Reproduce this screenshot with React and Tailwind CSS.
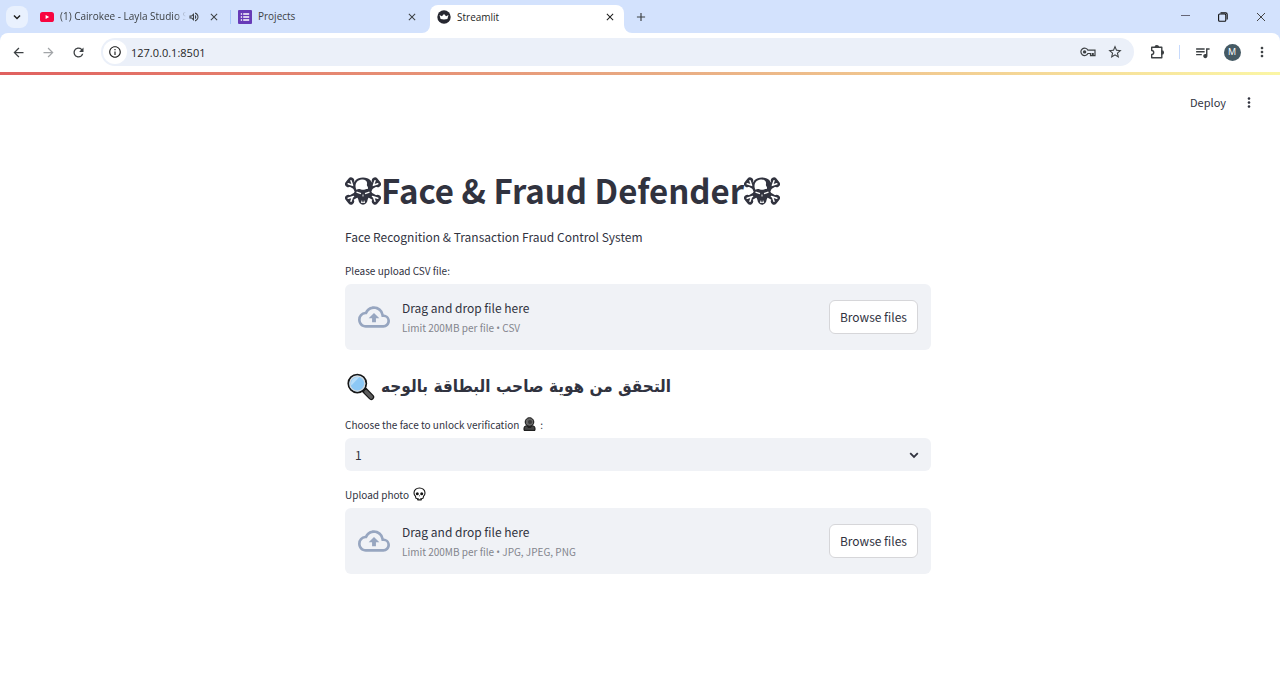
import { useRef } from "react";
import {
  MdAdd,
  MdArrowBack,
  MdArrowForward,
  MdClose,
  MdInfoOutline,
  MdMoreVert,
  MdOutlineCloudUpload,
  MdOutlineVolumeUp,
  MdQueueMusic,
  MdRefresh,
  MdStarOutline,
} from "react-icons/md";

function YoutubeIcon() {
  return (
    <svg width="14" height="12" viewBox="0 0 14 12" aria-hidden="true" className="shrink-0">
      <rect y="1" width="14" height="10" rx="2.6" fill="#f8053f" />
      <path d="M5.6 3.9 9.2 6 5.6 8.1Z" fill="#fff" />
    </svg>
  );
}

function FormsIcon() {
  return (
    <svg width="14" height="14" viewBox="0 0 14 14" aria-hidden="true" className="shrink-0">
      <rect width="14" height="14" rx="1" fill="#673ab7" />
      <path d="M5.2 4h6M5.2 7h6M5.2 10h6M2.8 4h1.3M2.8 7h1.3M2.8 10h1.3" stroke="#fff" strokeWidth="1.4" />
    </svg>
  );
}

function CrownIcon() {
  return (
    <svg width="14" height="14" viewBox="0 0 14 14" aria-hidden="true" className="shrink-0">
      <circle cx="7" cy="7" r="6.7" fill="#262730" />
      <path d="M2.5 5 4.9 6.2 7 4.1 9.1 6.2 11.5 5 10.4 9Q7 9.9 3.6 9Z" fill="#fff" />
    </svg>
  );
}

function ChevronIcon({ className, size }) {
  return (
    <svg width={size} height={size} viewBox="0 0 10 10" aria-hidden="true" fill="none" stroke="currentColor" strokeWidth="1.8" className={className}>
      <path d="M1.2 3.2 5 7 8.8 3.2" />
    </svg>
  );
}

function KeyIcon() {
  return (
    <svg width="16" height="10" viewBox="0 0 16 10" aria-hidden="true" fill="none" stroke="currentColor" strokeWidth="1.2">
      <path d="M7.9 3.2A3.7 3.7 0 1 0 7.9 6.5H10.5V8.6H12.3V6.5H13.2V8.6H15V3.2Z" />
      <circle cx="4.6" cy="4.9" r="1.7" fill="currentColor" stroke="none" />
    </svg>
  );
}

function PuzzleIcon() {
  return (
    <svg width="16" height="16" viewBox="0 0 16 16" aria-hidden="true" fill="none" stroke="currentColor" strokeWidth="1.4">
      <path d="M2.7 3.2H12.8V13.8H2.7V10.5A2 2 0 0 0 2.7 6.5Z" strokeLinejoin="round" />
      <path d="M6.2 3.2A1.6 1.6 0 0 1 9.4 3.2ZM12.8 6.9A1.6 1.6 0 0 1 12.8 10.1Z" fill="currentColor" />
    </svg>
  );
}

function SkullCrossbones() {
  return (
    <svg viewBox="0 0 36 28" role="img" aria-label="Skull and crossbones" className="inline-block h-7 w-9 shrink-0">
      <g stroke="#31333f" strokeLinecap="round">
        <path d="M5 6.5 31 21.5M31 6.5 5 21.5" strokeWidth="6" />
        <path d="M3.2 7 6 3.5M32.8 7 30 3.5M3.2 21 6 24.5M32.8 21 30 24.5" strokeWidth="6.2" />
      </g>
      <g stroke="#fff" strokeLinecap="round" strokeWidth="1.5">
        <path d="M3.2 6.8 8.5 8.5M6 3.8 7.3 7.6M32.8 6.8 27.5 8.5M30 3.8 28.7 7.6M3.2 21.2 8.5 19.5M6 24.2 7.3 20.4M32.8 21.2 27.5 19.5M30 24.2 28.7 20.4" />
      </g>
      <path
        d="M18 .5C11.6.5 8 4.7 8.2 9.7c.1 2.2.7 3.4 1.4 4.8-.9 1.6-.7 3.5.8 4.7 1.6.8 2.5 1.6 2.9 3.3.5 3.2 2.2 5.2 4.7 5.200s4.200-2 4.700-5.200c.4-1.700 1.300-2.500 2.900-3.300 1.500-1.200 1.700-3.100.8-4.700.7-1.400 1.300-2.600 1.400-4.800C28 4.700 24.400.5 18 .5Z"
        fill="#31333f"
      />
      <path d="M16.8 2.6c-3.9.4-6.3 3-6.3 6.5 0 1.6.4 2.7.9 3.7 1.3-.8 2.9-.9 4.5-.4.8.3 1.5.4 2.1.4s1.3-.1 2.1-.4c1-.3 1.8-.4 2.5-.3.8-1 .4-2-.2-2.9-.9-1.2-.3-2.3-.3-3.3-.2-2.200-2.500-3.600-5.300-3.300Z" fill="#fff" />
      <path d="M11.5 15.2 16 16.7M24.5 15.2 20 16.7" stroke="#fff" strokeWidth="1.3" fill="none" />
      <path d="M18 17.5V19.5M16 25.4h4M16.8 23.6v2M19.2 23.6v2" stroke="#fff" strokeWidth=".9" />
    </svg>
  );
}

function Magnifier() {
  return (
    <svg width="28" height="28" viewBox="0 0 28 28" role="img" aria-label="Magnifying glass" className="shrink-0">
      <path d="M17.2 16.8 24.2 24" stroke="#171717" strokeWidth="6" strokeLinecap="round" />
      <path d="M19 18.7 24.2 24" stroke="#5d5d5d" strokeWidth="3.6" strokeLinecap="round" />
      <circle cx="10.3" cy="10.6" r="9" fill="#8cc8f5" stroke="#171717" strokeWidth="1.8" />
      <circle cx="10.3" cy="10.6" r="7.5" fill="none" stroke="#d6d9dc" strokeWidth="1.2" />
      <path d="M4.3 12.5 12.4 4.1A6.8 6.8 0 0 0 4.3 12.5Z" fill="#b7defa" />
    </svg>
  );
}

function HoodedFigure() {
  return (
    <svg width="13" height="14" viewBox="0 0 13 14" role="img" aria-label="Hooded figure" className="ml-1 shrink-0">
      <path d="M1 13.4V11q0-1.9 2.2-2.2h6.6Q12 9.1 12 11v2.4Z" fill="#444" stroke="#111" strokeWidth="1" />
      <circle cx="6.5" cy="5" r="4.3" fill="#666" stroke="#111" strokeWidth="1" />
      <circle cx="7" cy="5" r="2" fill="#3a3a3a" />
      <path d="M4 9h5l-1 2H5Z" fill="#222" />
    </svg>
  );
}

function Skull() {
  return (
    <svg width="13" height="14" viewBox="0 0 13 14" role="img" aria-label="Skull" className="ml-1 shrink-0">
      <path
        d="M6.5 1C3.2 1 1 3.2 1 6.1c0 1.5.5 2.5 1.5 3.2l.4 1.9 1.5.5.5 1.2h3.200l.5-1.200 1.500-.5.4-1.900C11.5 8.6 12 7.6 12 6.1 12 3.2 9.8 1 6.5 1Z"
        fill="#fff"
        stroke="#151515"
        strokeWidth="1.1"
      />
      <circle cx="4.3" cy="6.7" r="1.5" fill="#151515" />
      <circle cx="8.7" cy="6.7" r="1.5" fill="#151515" />
      <path d="M6.5 8 5.8 9.3h1.4Z" fill="#151515" />
      <path d="M5.3 11v1.5M7.7 11v1.5" stroke="#151515" strokeWidth=".7" />
    </svg>
  );
}

function CloseTab({ label }) {
  return (
    <button type="button" aria-label={label} className="flex size-4 shrink-0 items-center justify-center">
      <MdClose size={12} />
    </button>
  );
}

function TabStrip() {
  return (
    <div className="flex h-[33px] bg-[#d3e2fd] text-[#3c4043]">
      <div className="flex flex-1 items-center pl-1.5">
        <button type="button" aria-label="Search tabs" className="flex size-[22px] items-center justify-center rounded-lg bg-[#e9f1fe] text-[#1f1f1f]">
          <ChevronIcon size={8} />
        </button>
        <div className="ml-3 flex w-[191px] items-center">
          <YoutubeIcon />
          <button type="button" className="ml-1.5 min-w-0 flex-1 text-left whitespace-nowrap [mask-image:linear-gradient(to_right,black_92%,transparent)]">
            (1) Cairokee - Layla Studio S
          </button>
          <MdOutlineVolumeUp size={12} className="mr-1.5 ml-0.5 shrink-0" />
          <CloseTab label="Close Cairokee" />
          <span className="ml-2 h-[14px] w-px bg-[#a8c7fa]" />
        </div>
        <div className="flex w-[199px] items-center pr-2.5 pl-[7px]">
          <FormsIcon />
          <button type="button" className="ml-1.5 flex-1 text-left">Projects</button>
          <CloseTab label="Close Projects" />
        </div>
        <div className="relative flex w-[194px] items-center self-stretch">
          <svg width="8" height="8" viewBox="0 0 8 8" aria-hidden="true" className="absolute bottom-0 -left-2">
            <path d="M8 0V8H0A8 8 0 0 0 8 0Z" fill="#fff" />
          </svg>
          <div className="mt-[5px] flex flex-1 items-center self-stretch rounded-t-lg bg-white pr-1.5 pb-1 pl-[7px] text-[#1f1f1f]">
            <CrownIcon />
            <button type="button" className="ml-1.5 flex-1 text-left">Streamlit</button>
            <CloseTab label="Close Streamlit" />
          </div>
          <svg width="8" height="8" viewBox="0 0 8 8" aria-hidden="true" className="absolute -right-2 bottom-0">
            <path d="M0 0V8H8A8 8 0 0 1 0 0Z" fill="#fff" />
          </svg>
        </div>
        <button type="button" aria-label="New tab" className="ml-[7px] flex size-5 items-center justify-center">
          <MdAdd size={14} />
        </button>
      </div>
      <div className="flex">
        <button type="button" aria-label="Minimize" className="flex w-[38px] items-center justify-center">
          <svg width="10" height="10" viewBox="0 0 10 10"><path d="M1 3.5h9" stroke="#667" /></svg>
        </button>
        <button type="button" aria-label="Restore" className="flex w-[38px] items-center justify-center">
          <svg width="10" height="10" viewBox="0 0 10 10" fill="none" stroke="#111" strokeWidth="1.1">
            <rect x=".6" y="2" width="7.2" height="7.2" rx="1" />
            <path d="M2.5 .9H7.7Q9.2 .9 9.2 2.4V7.5" />
          </svg>
        </button>
        <button type="button" aria-label="Close window" className="flex w-[38px] items-center justify-center">
          <svg width="10" height="10" viewBox="0 0 10 10"><path d="M1 1 9 9M9 1 1 9" stroke="#444" /></svg>
        </button>
      </div>
    </div>
  );
}

const toolButton = "flex h-7 w-[30px] shrink-0 items-center justify-center";

function Toolbar() {
  return (
    <div className="bg-[#d3e2fd]">
      <div className="flex h-[38px] items-center rounded-t-lg bg-white px-[3px] text-[#3c4043]">
        <button type="button" aria-label="Back" className={toolButton}><MdArrowBack size={15} /></button>
        <button type="button" aria-label="Forward" className={`${toolButton} text-[#a2a5a8]`}><MdArrowForward size={15} /></button>
        <button type="button" aria-label="Reload" className={toolButton}><MdRefresh size={15} /></button>
        <div className="ml-2 flex h-7 flex-1 items-center rounded-full bg-[#ebf0f9] pr-1.5 pl-0.5">
          <button type="button" aria-label="Site information" className="flex size-6 items-center justify-center rounded-full bg-white text-[#1f1f1f]">
            <MdInfoOutline size={14} />
          </button>
          <input type="text" aria-label="Address" defaultValue="127.0.0.1:8501" className="ml-1 h-6 flex-1 bg-transparent text-[11px] text-[#1f1f1f] outline-none" />
          <button type="button" aria-label="Passwords" className="flex w-[27px] items-center justify-center"><KeyIcon /></button>
          <button type="button" aria-label="Bookmark" className="flex w-[27px] items-center justify-center"><MdStarOutline size={16} /></button>
        </div>
        <button type="button" aria-label="Extensions" className={`ml-2 ${toolButton}`}><PuzzleIcon /></button>
        <span className="mx-[7px] h-[14px] w-px bg-[#c7dafc]" />
        <button type="button" aria-label="Media controls" className={toolButton}><MdQueueMusic size={17} /></button>
        <button type="button" aria-label="Profile" className={toolButton}>
          <span className="flex size-[17px] items-center justify-center rounded-full bg-[#455a64] text-[9px] text-white">M</span>
        </button>
        <button type="button" aria-label="Browser menu" className={toolButton}><MdMoreVert size={16} /></button>
      </div>
    </div>
  );
}

function Uploader({ id, label, glyph, accept, types }) {
  const input = useRef(null);
  return (
    <div>
      <label htmlFor={id} className="flex h-5 items-center text-[10px]">
        {label}
        {glyph}
      </label>
      <div className="mt-1 flex h-[66px] items-center rounded-md bg-[#f0f2f6] px-[13px]">
        <MdOutlineCloudUpload size={32} className="shrink-0 text-[#97a6c0]" />
        <div className="ml-3 flex-1 pt-0.5">
          <p className="text-[12px] leading-5">Drag and drop file here</p>
          <p className="text-[10px] leading-5 text-[#83858d]">
            Limit 200MB per file <span className="font-['Open_Sans']">•</span> {types}
          </p>
        </div>
        <input ref={input} id={id} type="file" accept={accept} className="sr-only" />
        <button
          type="button"
          onClick={() => input.current.click()}
          className="h-[34px] rounded-md border border-[#d6d6d9] bg-white px-2.5 text-[12px]"
        >
          Browse files
        </button>
      </div>
    </div>
  );
}

export default function App() {
  return (
    <div className="min-h-screen bg-white">
      <header className="font-['Open_Sans',sans-serif] text-[10px]">
        <TabStrip />
        <Toolbar />
      </header>
      <div className="font-['Noto_Sans_CJK_SC',sans-serif] text-[#31333f]">
        <div className="mt-px h-[3px] bg-linear-to-r from-[#e0605f] via-[#e8a982] to-[#fbf6a5]" />
        <div className="flex h-[55px] items-center justify-end pr-[23px]">
          <button type="button" className="text-[11px]">Deploy</button>
          <button type="button" aria-label="Main menu" className="ml-[15px] flex size-4 items-center justify-center">
            <MdMoreVert size={17} />
          </button>
        </div>
        <div className="pr-1">
          <main className="mx-auto mt-9 w-full max-w-[586px] pb-24">
            <h1 className="flex h-[50px] items-center text-[33px] font-bold whitespace-nowrap">
              <SkullCrossbones />
              Face &amp; Fraud Defender
              <SkullCrossbones />
            </h1>
            <p className="mt-[11px] text-[12px] leading-5">Face Recognition &amp; Transaction Fraud Control System</p>
            <div className="mt-[13px]">
              <Uploader id="csv" label="Please upload CSV file:" accept=".csv" types="CSV" />
            </div>
            <h2 className="mt-[21px] flex h-8 items-center gap-1.5 pl-0.5 font-['DejaVu_Sans_Condensed','DejaVu_Sans',sans-serif] text-[17px] font-bold whitespace-nowrap">
              <Magnifier />
              <span dir="rtl" lang="ar">التحقق من هوية صاحب البطاقة بالوجه</span>
            </h2>
            <label htmlFor="face" className="mt-[11px] flex h-5 items-center text-[10px]">
              Choose the face to unlock verification
              <HoodedFigure />
              <span className="ml-1">:</span>
            </label>
            <div className="relative mt-1">
              <select id="face" className="h-[33px] w-full appearance-none rounded-md bg-[#f0f2f6] px-2.5 text-[12px]">
                <option>1</option>
              </select>
              <ChevronIcon size={10} className="pointer-events-none absolute top-3 right-3" />
            </div>
            <div className="mt-[13px]">
              <Uploader id="photo" label="Upload photo" glyph={<Skull />} accept=".jpg,.jpeg,.png" types="JPG, JPEG, PNG" />
            </div>
          </main>
        </div>
      </div>
    </div>
  );
}
